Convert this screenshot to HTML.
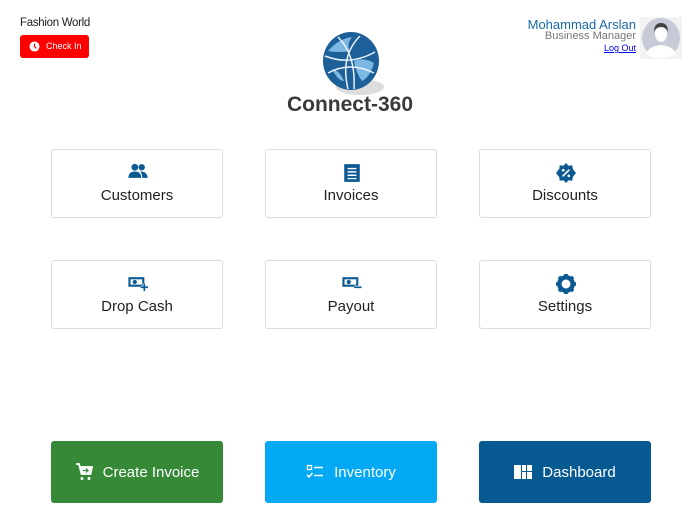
<!DOCTYPE html>
<html><head><style>
*{margin:0;padding:0;box-sizing:border-box}
body{width:700px;height:525px;background:#fff;font-family:"Liberation Sans",sans-serif;position:relative;overflow:hidden}
.a{position:absolute}
.card{position:absolute;width:172px;height:69px;border:1px solid #ddd;border-radius:3px;text-align:center;color:#222;font-size:15px;box-shadow:0 0 1px #eee}
.card svg{position:absolute;left:76px;top:13px}
.card span{position:absolute;left:0;right:0;top:37px}
.btn{position:absolute;width:172px;height:62px;border-radius:3px;color:#fff;font-size:15px;display:flex;align-items:center;justify-content:center;gap:10px}
</style></head><body>
<div class="a" style="left:20px;top:17px;font-size:11.5px;color:#222;letter-spacing:-0.3px">Fashion World</div>
<div class="a" style="left:20px;top:35px;width:69px;height:23px;background:#f00;border-radius:3px;color:#fff;font-size:9px;line-height:23px;padding-left:26px">Check In</div>
<svg class="a" style="left:29px;top:41px" width="11" height="11" viewBox="0 0 12 12"><circle cx="6" cy="6" r="5.5" fill="#fff"/><path d="M6 3v3l2 2" stroke="#f00" stroke-width="1.3" fill="none"/></svg>
<div class="a" style="right:64px;top:17px;font-size:13px;color:#1a6aa6;text-align:right">Mohammad Arslan</div>
<div class="a" style="right:64px;top:30px;font-size:11px;color:#777;text-align:right">Business Manager</div>
<div class="a" style="right:64px;top:43px;font-size:9px;color:#00e;text-decoration:underline">Log Out</div>
<div class="a" style="left:640px;top:17px;width:42px;height:42px;background:#f2f2f2"></div>
<svg class="a" style="left:641px;top:18px" width="40" height="40" viewBox="0 0 40 40"><ellipse cx="20" cy="20" rx="19" ry="20" fill="#c7cbd8"/><path d="M5 36q3-8 15-9q12 1 15 9q-6 4-15 4t-15-4z" fill="#fff"/><ellipse cx="20" cy="16" rx="6" ry="8" fill="#fff"/><path d="M13 14q0-9 7-9t7 9q-2-5-7-5t-7 5z" fill="#444"/></svg>
<svg class="a" style="left:320px;top:31px" width="68" height="66" viewBox="0 0 68 66"><ellipse cx="40" cy="56" rx="24" ry="8" fill="#ddd"/><ellipse cx="31" cy="30" rx="28" ry="29" fill="#1d5f99"/><path d="M8 20q10-12 24-14q-6 8-2 14q-10 2-22 0zM34 30q10-4 20 2q-4 14-12 18q-6-8-8-20zM12 38q8 2 12 12q-6 0-12-12z" fill="#7cb8e4"/><path d="M5 25q25 10 50-4M8 42q22-12 46 0M18 6q18 18 16 52M40 5q-20 20-12 53" stroke="#e8f2fb" stroke-width="1.5" fill="none"/></svg>
<div class="a" style="left:0;width:700px;top:93px;text-align:center;font-size:21px;font-weight:bold;color:#3a3a3a;font-family:'Liberation Sans',sans-serif">Connect-360</div>

<div class="card" style="left:51px;top:149px"><svg width="20" height="17" viewBox="0 0 18 16"><circle cx="6" cy="4" r="3.2" fill="#0b5a92"/><circle cx="12.5" cy="4" r="3" fill="#0b5a92"/><path d="M0 14q0-6 6-6t6 6zM11 8q7 0 7 6h-5q0-4-2-6z" fill="#0b5a92"/></svg><span>Customers</span></div>
<div class="card" style="left:265px;top:149px"><svg width="20" height="20" viewBox="0 0 18 18"><rect x="2" y="1" width="14" height="16" fill="#0b5a92"/><path d="M5 5h8M5 8h8M5 11h8M5 14h8" stroke="#fff" stroke-width="1.3"/></svg><span>Invoices</span></div>
<div class="card" style="left:479px;top:149px"><svg width="20" height="20" viewBox="0 0 18 18"><path d="M9 0l2.3 2.5 3.3-.5.5 3.3L18 9l-2.9 3.7-.5 3.3-3.3-.5L9 18l-2.3-2.5-3.3.5-.5-3.3L0 9l2.9-3.7.5-3.3 3.3.5z" fill="#0b5a92"/><path d="M6 12l6-6" stroke="#fff" stroke-width="1.5"/><circle cx="6.5" cy="6.5" r="1.2" fill="#fff"/><circle cx="11.5" cy="11.5" r="1.2" fill="#fff"/></svg><span>Discounts</span></div>
<div class="card" style="left:51px;top:260px"><svg width="21" height="17" viewBox="0 0 19 16"><rect x="0" y="3" width="15" height="9" fill="#0b5a92"/><rect x="2" y="5" width="11" height="5" fill="#fff"/><circle cx="6" cy="7.5" r="2" fill="#0b5a92"/><path d="M15 9v7M11.5 12.5h7" stroke="#fff" stroke-width="3"/><path d="M15 9v7M11.5 12.5h7" stroke="#0b5a92" stroke-width="1.6"/></svg><span>Drop Cash</span></div>
<div class="card" style="left:265px;top:260px"><svg width="21" height="17" viewBox="0 0 19 16"><rect x="0" y="3" width="15" height="9" fill="#0b5a92"/><rect x="2" y="5" width="11" height="5" fill="#fff"/><circle cx="6" cy="7.5" r="2" fill="#0b5a92"/><path d="M11 12.5h7" stroke="#fff" stroke-width="3"/><path d="M11 12.5h7" stroke="#0b5a92" stroke-width="1.6"/></svg><span>Payout</span></div>
<div class="card" style="left:479px;top:260px"><svg width="20" height="20" viewBox="0 0 18 18"><circle cx="9" cy="9" r="6" fill="none" stroke="#0b5a92" stroke-width="4"/><path d="M9 0v4M9 14v4M0 9h4M14 9h4M2.6 2.6l2.8 2.8M12.6 12.6l2.8 2.8M2.6 15.4l2.8-2.8M12.6 5.4l2.8-2.8" stroke="#0b5a92" stroke-width="3.2"/><circle cx="9" cy="9" r="2.5" fill="#fff"/></svg><span>Settings</span></div>

<div class="btn" style="left:51px;top:441px;background:#368a37"><svg width="18" height="18" viewBox="0 0 18 18"><path d="M1 1h3l2.5 10h9l1.5-7H5" stroke="#fff" stroke-width="1.8" fill="none"/><path d="M5 4h12l-1.5 7h-9z" fill="#fff"/><path d="M8 7.5h5M11 5.5l2 2-2 2" stroke="#368a37" stroke-width="1.2" fill="none"/><circle cx="7" cy="15.5" r="1.5" fill="#fff"/><circle cx="14" cy="15.5" r="1.5" fill="#fff"/></svg>Create Invoice</div>
<div class="btn" style="left:265px;top:441px;background:#03a9f4"><svg width="18" height="16" viewBox="0 0 18 16"><rect x="1.5" y="1.5" width="4" height="4" fill="none" stroke="#fff" stroke-width="1.3"/><path d="M8 3.5h9M8 11.5h9M1 11l2 2 3.5-4" stroke="#fff" stroke-width="1.6" fill="none"/></svg>Inventory</div>
<div class="btn" style="left:479px;top:441px;background:#075a91"><svg width="18" height="16" viewBox="0 0 18 16"><rect x="0" y="1" width="7" height="14" fill="#fff"/><rect x="8" y="1" width="4" height="6" fill="#fff"/><rect x="13" y="1" width="5" height="6" fill="#fff"/><rect x="8" y="8" width="4" height="7" fill="#fff"/><rect x="13" y="8" width="5" height="7" fill="#fff"/></svg>Dashboard</div>
</body></html>
